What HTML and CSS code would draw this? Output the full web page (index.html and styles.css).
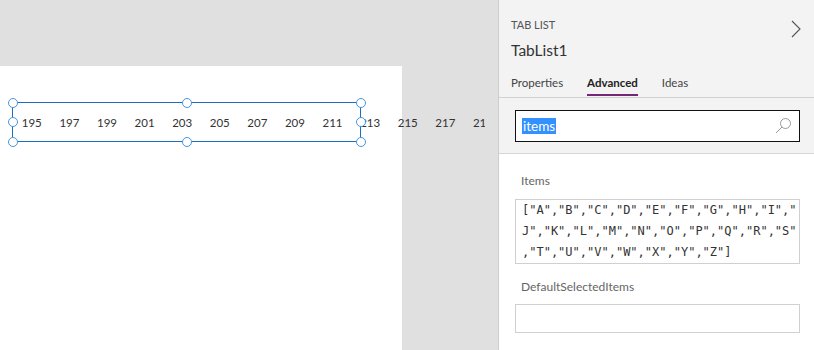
FILE: index.html
```html
<!DOCTYPE html>
<html lang="en">
<head>
    <meta charset="UTF-8">
    <title>TabList1 - Advanced</title>
    <link rel="stylesheet" href="styles.css">
</head>
<body>
    <div class="stage">
        <div class="screen"></div>
        <div class="tablist">
            <div class="tabstrip">
                <span class="tab-item">195</span>
                <span class="tab-item">197</span>
                <span class="tab-item">199</span>
                <span class="tab-item">201</span>
                <span class="tab-item">203</span>
                <span class="tab-item">205</span>
                <span class="tab-item">207</span>
                <span class="tab-item">209</span>
                <span class="tab-item">211</span>
                <span class="tab-item">213</span>
                <span class="tab-item">215</span>
                <span class="tab-item">217</span>
                <span class="tab-item">219</span>
            </div>
            <div class="selection">
                <span class="handle h-tl"></span>
                <span class="handle h-tc"></span>
                <span class="handle h-tr"></span>
                <span class="handle h-ml"></span>
                <span class="handle h-mr"></span>
                <span class="handle h-bl"></span>
                <span class="handle h-bc"></span>
                <span class="handle h-br"></span>
            </div>
        </div>
    </div>

    <div class="panel">
        <div class="panel-head">
            <div class="head-top">
                <div>
                    <div class="kind">TAB LIST</div>
                    <div class="name">TabList1</div>
                </div>
                <svg class="chevron" width="10" height="18" viewBox="0 0 10 18">
                    <path d="M1 1 L9 9 L1 17" fill="none" stroke="#555" stroke-width="1.1"/>
                </svg>
            </div>
            <div class="tabs">
                <span class="tab">Properties</span>
                <span class="tab active">Advanced</span>
                <span class="tab">Ideas</span>
            </div>
        </div>

        <div class="search-bar">
            <div class="search-box">
                <span class="sel-text">items</span>
                <svg class="search-icon" width="18" height="18" viewBox="0 0 18 18">
                    <circle cx="11.5" cy="6.5" r="5" fill="none" stroke="#9a9a9a" stroke-width="1"/>
                    <path d="M8 10 L2 16" stroke="#9a9a9a" stroke-width="1"/>
                </svg>
            </div>
        </div>

        <div class="props">
            <div class="prop-label">Items</div>
            <div class="prop-value mono">["A","B","C","D","E","F","G","H","I","J","K","L","M","N","O","P","Q","R","S","T","U","V","W","X","Y","Z"]</div>
            <div class="prop-label second">DefaultSelectedItems</div>
            <div class="prop-value empty"></div>
        </div>
    </div>
</body>
</html>
```

FILE: styles.css
```css
body {
    margin: 0;
    padding: 0;
    display: flex;
    height: 350px;
    overflow: hidden;
    font-family: "Lato", "Open Sans", sans-serif;
    background-color: #e0e0e0;
}

/* canvas */
.stage {
    position: relative;
    flex: 0 0 498px;
    height: 350px;
    overflow: hidden;
    background-color: #e0e0e0;
}
.screen {
    margin-top: 66px;
    width: 402px;
    height: 284px;
    background-color: white;
}
.tablist {
    position: absolute;
    left: 12px;
    top: 102px;
    width: 349px;
    height: 40px;
    box-sizing: border-box;
    border: 1px solid #1b6ec2;
}
.tabstrip {
    display: flex;
    align-items: center;
    width: 472px;
    height: 100%;
    overflow: hidden;
}
.tab-item {
    flex: 0 0 37.6px;
    text-align: center;
    font-size: 11.5px;
    color: #333;
}
.selection {
    position: absolute;
    top: -1px;
    left: -1px;
    right: -1px;
    bottom: -1px;
}
.handle {
    position: absolute;
    width: 10px;
    height: 10px;
    box-sizing: border-box;
    border: 1.5px solid #4a95dc;
    border-radius: 50%;
    background-color: white;
    transform: translate(-50%, -50%);
}
.h-tl { left: 0.5px; top: 0.5px; }
.h-tc { left: 50%; top: 0.5px; }
.h-tr { left: calc(100% - 0.5px); top: 0.5px; }
.h-ml { left: 0.5px; top: 50%; }
.h-mr { left: calc(100% - 0.5px); top: 50%; }
.h-bl { left: 0.5px; top: calc(100% - 0.5px); }
.h-bc { left: 50%; top: calc(100% - 0.5px); }
.h-br { left: calc(100% - 0.5px); top: calc(100% - 0.5px); }

/* property panel */
.panel {
    flex: 0 0 315px;
    min-width: 0;
    border-left: 1px solid #cdcdcd;
    background-color: white;
}
.panel-head {
    background-color: #f3f3f3;
    padding: 0 12px;
    border-bottom: 1px solid #d2d2d2;
}
.head-top {
    display: flex;
    justify-content: space-between;
    padding-top: 18px;
}
.kind {
    font-size: 11px;
    line-height: 14px;
    color: #555;
}
.name {
    margin-top: 8px;
    font-size: 15.5px;
    line-height: 20px;
    color: #333;
}
.chevron {
    margin-top: 2px;
    margin-right: 1px;
}
.tabs {
    display: flex;
    gap: 24px;
    margin-top: 15px;
    padding-bottom: 1px;
}
.tab {
    font-size: 11.5px;
    line-height: 16px;
    padding-bottom: 3px;
    border-bottom: 2px solid transparent;
    color: #444;
}
.tab.active {
    font-weight: bold;
    color: #222;
    border-bottom-color: #742774;
}
.search-bar {
    background-color: #f3f3f3;
    padding: 12px 14px 11px 16px;
    border-bottom: 1px solid #d6d6d6;
}
.search-box {
    display: flex;
    align-items: center;
    justify-content: space-between;
    height: 32px;
    box-sizing: border-box;
    border: 1px solid #111;
    background-color: white;
    padding: 0 7px 0 6px;
}
.sel-text {
    background-color: #3390ff;
    color: white;
    font-size: 13.5px;
    line-height: 16px;
    padding: 0 1px;
}
.props {
    padding: 0 14px 0 16px;
}
.prop-label {
    margin: 19px 0 10px 6px;
    font-size: 12px;
    line-height: 16px;
    color: #666;
}
.prop-label.second {
    margin-top: 15px;
    margin-bottom: 9px;
}
.prop-value {
    border: 1px solid #d0d0d0;
}
.mono {
    font-family: "DejaVu Sans Mono", monospace;
    font-size: 12px;
    line-height: 21px;
    color: #333;
    padding-left: 6px;
    line-break: anywhere;
    overflow-wrap: anywhere;
}
.empty {
    height: 27px;
}
```
